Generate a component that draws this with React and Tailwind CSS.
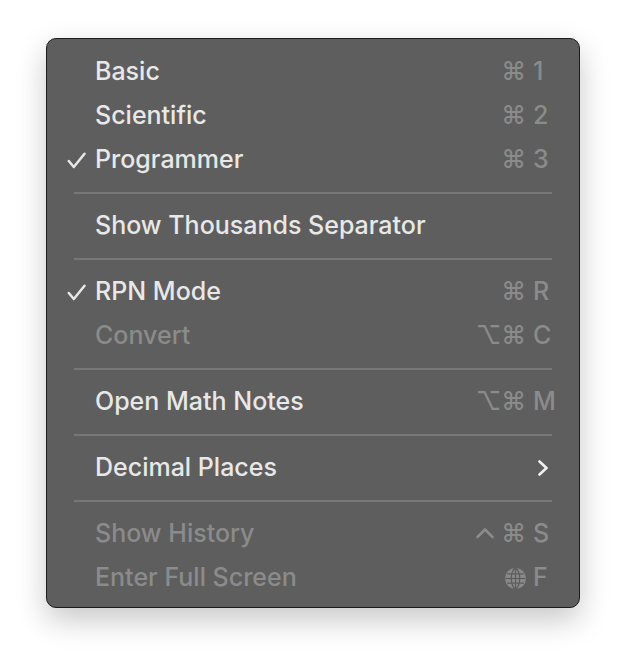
import React from "react";

const FONT = { fontFamily: "Inter, 'DejaVu Sans', sans-serif" };

const Check = () => (
  <svg width="19" height="17" viewBox="0 0 19 17" className="text-[#e8e8e8]">
    <path d="M1.8 9 L6.8 15 L17.5 1.8" fill="none" stroke="currentColor" strokeWidth="2.5" strokeLinecap="round" strokeLinejoin="round" />
  </svg>
);

const Globe = () => (
  <svg width="21" height="21" viewBox="0 0 20 20">
    <circle cx="10" cy="10" r="10" fill="#8a8a8a" />
    <g fill="none" stroke="#5d5d5d" strokeWidth="1.2">
      <ellipse cx="10" cy="10" rx="4" ry="9.5" />
      <line x1="10" y1="0.5" x2="10" y2="19.5" />
      <line x1="0.5" y1="10" x2="19.5" y2="10" />
      <path d="M2 5.5 H18 M2 14.5 H18" />
    </g>
  </svg>
);

const Caret = () => (
  <svg width="20" height="20" viewBox="0 0 20 20" className="mr-[4px]">
    <path d="M2.5 13 L10 5.5 L17.5 13" fill="none" stroke="#8b8b8b" strokeWidth="2.6" strokeLinecap="round" strokeLinejoin="round" />
  </svg>
);

const Chevron = () => (
  <svg width="12" height="16" viewBox="0 0 12 16">
    <path d="M2.5 1.5 L9.5 8 L2.5 14.5" fill="none" stroke="#f0f0f0" strokeWidth="2.6" strokeLinecap="round" strokeLinejoin="round" />
  </svg>
);

const Shortcut = ({ mods, keyName }) => (
  <div className="flex items-center text-[#8b8b8b]">
    <span className="flex items-center gap-[2px]">{mods}</span>
    <span className="w-[27px] pl-[7px] text-left">{keyName}</span>
  </div>
);

const Row = ({ label, checked, disabled, shortcut, submenu }) => (
  <div className="flex h-[44px] items-center">
    <div className="flex w-[48px] justify-end pr-[9px]">{checked && <Check />}</div>
    <span className={disabled ? "flex-1 text-[#8b8b8b]" : "flex-1 text-[#e8e8e8]"}>{label}</span>
    <div className="pr-[26px]">
      {submenu ? (
        <div className="pr-[4px]">
          <Chevron />
        </div>
      ) : (
        shortcut
      )}
    </div>
  </div>
);

const Sep = () => (
  <div className="flex h-[22px] items-center px-[27px]">
    <div className="h-[2px] w-full bg-[#777777]" />
  </div>
);

export default function App() {
  return (
    <div className="min-h-screen bg-white pl-[46px] pt-[38px]" style={FONT}>
      <div className="w-[534px] rounded-[10px] border border-[#1c1c1c] bg-[#5e5e5e] pt-[11px] pb-[7px] text-[25px] font-medium shadow-[0_12px_30px_rgba(0,0,0,0.22)]">
        <Row label="Basic" shortcut={<Shortcut mods="⌘" keyName="1" />} />
        <Row label="Scientific" shortcut={<Shortcut mods="⌘" keyName="2" />} />
        <Row label="Programmer" checked shortcut={<Shortcut mods="⌘" keyName="3" />} />
        <Sep />
        <Row label="Show Thousands Separator" />
        <Sep />
        <Row label="RPN Mode" checked shortcut={<Shortcut mods="⌘" keyName="R" />} />
        <Row label="Convert" disabled shortcut={<Shortcut mods="⌥⌘" keyName="C" />} />
        <Sep />
        <Row label="Open Math Notes" shortcut={<Shortcut mods="⌥⌘" keyName="M" />} />
        <Sep />
        <Row label="Decimal Places" submenu />
        <Sep />
        <Row label="Show History" disabled shortcut={<Shortcut mods={<><Caret />⌘</>} keyName="S" />} />
        <Row
          label="Enter Full Screen"
          disabled
          shortcut={<Shortcut mods={<Globe />} keyName="F" />}
        />
      </div>
    </div>
  );
}
